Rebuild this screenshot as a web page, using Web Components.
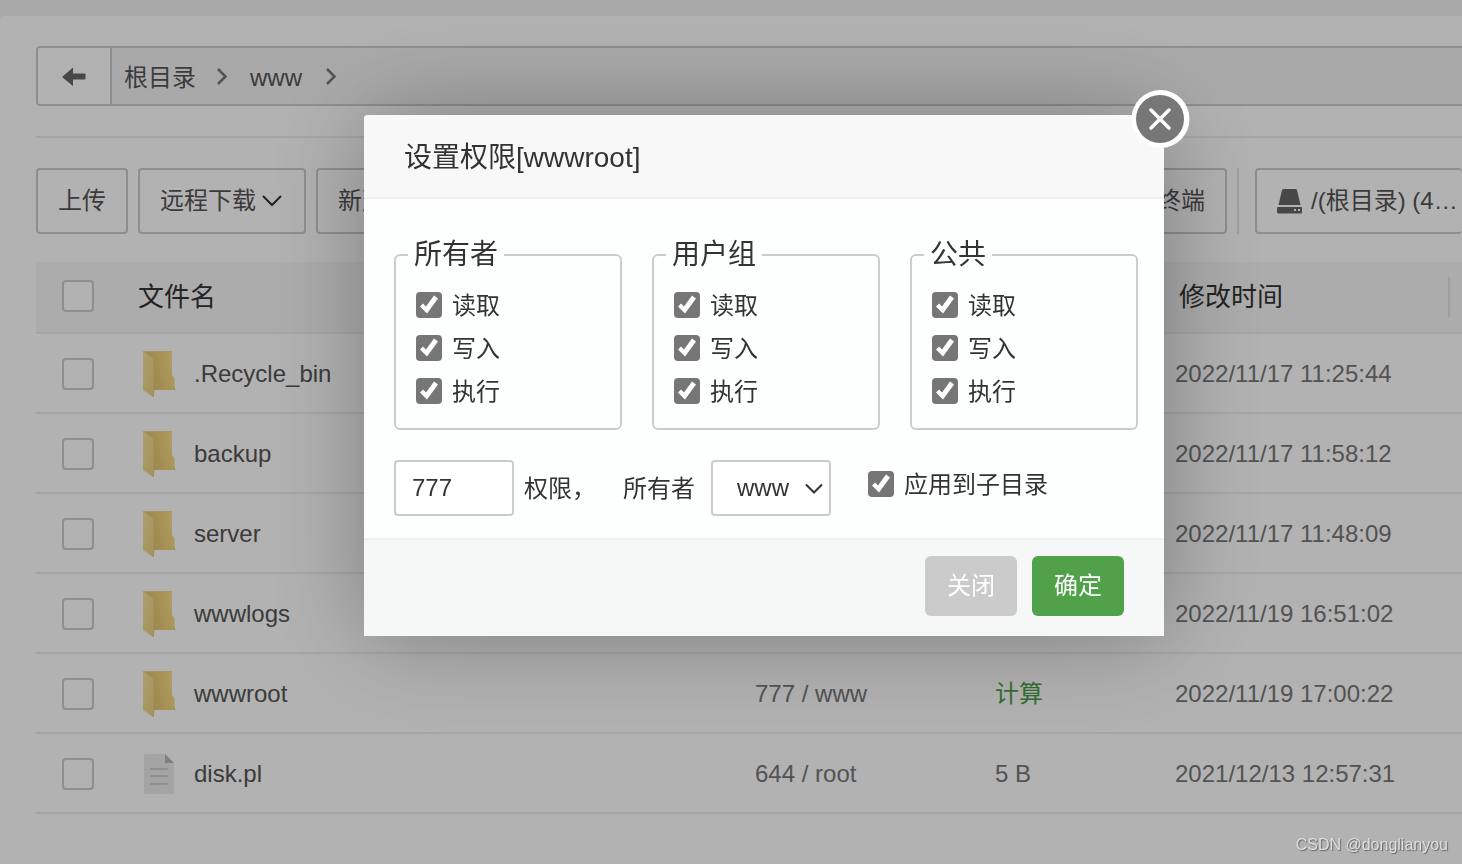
<!DOCTYPE html>
<html lang="zh-CN">
<head>
<meta charset="utf-8">
<title>文件管理</title>
<style>
body{margin:0;background:#f2f2f2;color:#555;font:24px/36px "Liberation Sans","Noto Sans CJK SC",sans-serif;height:100vh;overflow:hidden}
</style>
</head>
<body>
<file-page></file-page>
<perm-dialog heading="设置权限[wwwroot]"></perm-dialog>
<water-mark>CSDN @donglianyou</water-mark>
<script>
function define(name, html, setup) {
  const tpl = document.createElement('template');
  tpl.innerHTML = '<style>*{box-sizing:border-box}svg{display:block;flex:none}button,input,select{font:inherit;color:inherit;margin:0}</style>' + html;
  customElements.define(name, class extends HTMLElement {
    constructor() {
      super();
      this.attachShadow({mode: 'open'}).append(tpl.content.cloneNode(true));
    }
    connectedCallback() { if (setup) setup(this, this.shadowRoot); }
  });
}

define('path-bar', `<style>
:host{display:flex;height:60px;box-sizing:border-box;background:#f3f3f3;border:2px solid #ccc;border-right:0;border-radius:4px 0 0 4px;overflow:hidden}
button{width:74px;padding:2px 0 0;display:grid;place-items:center;border:0;border-right:2px solid #ccc;background:#fff}
nav{display:flex;align-items:center;padding:3px 0 0 12px}
a{color:inherit;text-decoration:none}
svg.sep{margin:0 20px}
</style>
<button aria-label="返回"><svg width="24" height="20"><path d="M0 10 11 0.5V6.500H22.500q1 0 1 1v4q0 1-1 1H11V19z" fill="#666"/></svg></button>
<nav aria-label="路径"><a href="#root">根目录</a><svg class="sep" width="14" height="20"><path d="M2 1 9.500 8.500 2 16" fill="none" stroke="#777" stroke-width="2.500"/></svg><a href="#www">www</a><svg class="sep" width="18" height="20"><path d="M5 1 12.500 8.500 5 16" fill="none" stroke="#777" stroke-width="2.500"/></svg></nav>`);

define('tool-button', `<style>
:host{display:block;flex:none}
button{display:flex;align-items:center;gap:var(--gap,6px);width:100%;height:66px;padding:0 20px;border:2px solid #ccc;border-right-width:var(--end,2px);border-radius:4px;background:#fff;white-space:nowrap}
</style><button><slot></slot></button>`);

define('tool-bar', `<style>
:host{display:flex;gap:10px;overflow:hidden}
.term{margin-left:auto}
.rule{width:2px;background:#e3e3e3;margin-right:6px;flex:none}
.disk{width:207px;--gap:8px;--end:0}
</style>
<tool-button>上传</tool-button>
<tool-button>远程下载<svg width="22" height="14"><path d="M1 2 10 11 19 2" fill="none" stroke="#333" stroke-width="2"/></svg></tool-button>
<tool-button>新建</tool-button>
<tool-button class="term">终端</tool-button>
<div class="rule"></div>
<tool-button class="disk"><svg width="26" height="26"><path d="M5 2q.4-1 1.500-1h12q1.200 0 1.500 1l3.500 15H1.500zM1 19h23q1 0 1 1v4q0 1.500-1.500 1.500h-22Q0 25.500 0 24v-4q0-1 1-1z" fill="#666"/><path d="M17 21h2v2h-2zM21 21h2v2h-2z" fill="#fff"/></svg>/(根目录) (4…</tool-button>`);

define('file-icon', `<style>:host{display:block;width:34px;height:48px}:host([kind=file]) .dir,:host(:not([kind=file])) .doc{display:none}</style>
<svg class="dir" width="34" height="48"><defs><linearGradient id="b" x1="0" x2="1" y1=".6" y2=".3"><stop stop-color="#dab965"/><stop offset="1" stop-color="#fce08a"/></linearGradient><linearGradient id="f" x1="0" x2="1" y1="0" y2="1"><stop stop-color="#f8e29b"/><stop offset="1" stop-color="#ebd183"/></linearGradient></defs>
<path d="M30 35 33 38V40H28z" fill="#aaa"/><path d="M1 1H30V25L32.500 28V40H10z" fill="url(#b)"/><path d="M1 1H30V2H2z" fill="#efd98d"/><path d="M1 1 12 9V40L11 47 1 40z" fill="url(#f)"/><path d="M12 9V40L11 47" fill="none" stroke="#e5c874"/></svg>
<svg class="doc" width="34" height="48"><path d="M4 4H23L32 13V42q0 2-2 2H4q-2 0-2-2V6q0-2 2-2z" fill="#ebebeb"/><path d="M23 4 32 13H23z" fill="#b5b5b5"/><path d="M9 19H25M9 26H25M9 34H25" stroke="#ccc" stroke-width="2" stroke-linecap="round"/></svg>`);

define('file-table', `<style>
:host{display:block}
table{width:100%;table-layout:fixed;border-collapse:separate;border-spacing:0}
th,td{padding:0;border-bottom:2px solid #ededed;text-align:left;font-weight:400;white-space:nowrap}
th{height:72px;background:#f7f7f7;color:#333;font-size:26px}
td{height:80px;padding-top:2px;color:#777}
.pick{width:102px;padding-left:26px}.name{width:617px}.perm{width:240px}.size{width:180px}
th.pick{padding-bottom:2px}
th.date{padding-left:4px}
.head{display:flex;justify-content:space-between;align-items:center;padding-right:12px}
.head i{width:2px;height:40px;background:#e3e3e3}
.entry{display:flex;align-items:center;gap:18px;padding-left:4px;color:#555}
input{appearance:none;display:block;width:32px;height:32px;border:2px solid #ccc;border-radius:4px;background:#fff}
a{color:#4a9f43;text-decoration:none}
</style>
<table><thead><tr><th class="pick"><input type="checkbox" aria-label="全选"></th><th class="name">文件名</th><th class="perm"></th><th class="size"></th><th class="date"><div class="head">修改时间<i></i></div></th></tr></thead><tbody></tbody></table>`,
(host, root) => {
  const rows = [
    ['.Recycle_bin', '', '', '2022/11/17 11:25:44'],
    ['backup', '', '', '2022/11/17 11:58:12'],
    ['server', '', '', '2022/11/17 11:48:09'],
    ['wwwlogs', '', '', '2022/11/19 16:51:02'],
    ['wwwroot', '777 / www', '<a href="#size">计算</a>', '2022/11/19 17:00:22'],
    ['disk.pl', '644 / root', '5 B', '2021/12/13 12:57:31', 'file']
  ];
  root.querySelector('tbody').innerHTML = rows.map(([n, p, s, d, k = 'dir']) =>
    `<tr><td class="pick"><input type="checkbox" aria-label="${n}"></td><td><div class="entry"><file-icon kind="${k}"></file-icon><span>${n}</span></div></td><td>${p}</td><td>${s}</td><td>${d}</td></tr>`).join('');
});

define('file-page', `<style>
:host{display:block;margin-top:16px;min-height:calc(100vh - 16px);padding:30px 0 0 36px;box-sizing:border-box;background:#fff;border-radius:4px 0 0 0}
hr{height:2px;border:0;margin:30px 0;background:#ededed}
file-table{margin-top:28px}
</style>
<path-bar></path-bar><hr><tool-bar></tool-bar><file-table></file-table>`);

define('check-item', `<style>
:host{display:block}
label{display:flex;align-items:center;gap:10px;height:43px}
span{padding-top:2px}
input{appearance:none;width:26px;height:26px;border-radius:4px;background:#767676}
input:checked::before{content:"";display:block;width:26px;height:26px;background:#fff;clip-path:polygon(4px 15px,7px 12px,10px 15px,18px 4px,22px 7px,11px 22px)}
</style><label><input type="checkbox" checked><span><slot></slot></span></label>`);

define('perm-group', `<style>
:host{display:block;flex:1}
fieldset{margin:0;min-width:0;height:195px;border:2px solid #ccc;border-radius:6px;padding:8px 20px 0}
legend{margin-left:-8px;padding:0 6px;font-size:28px;line-height:40px}
</style><fieldset><legend></legend><check-item>读取</check-item><check-item>写入</check-item><check-item>执行</check-item></fieldset>`,
(host, root) => { root.querySelector('legend').textContent = host.getAttribute('name'); });

define('perm-dialog', `<style>
:host{position:fixed;inset:0;display:flex;justify-content:center;align-items:flex-start;padding:115px 0 0 66px;box-sizing:border-box;background:rgba(0,0,0,.3);color:#333}
section{position:relative;width:800px;background:#fdfefe;border-radius:4px 4px 0 0;box-shadow:2px 2px 100px rgba(0,0,0,.3)}
h2{margin:0;height:84px;padding:2px 40px 0;border-bottom:2px solid #eee;border-radius:4px 4px 0 0;background:#f8f8f8;font-size:28px;line-height:82px;font-weight:400}
.close{position:absolute;top:-26px;right:-26px;width:58px;height:60px;padding:0;border:0;background:none}
.groups{display:flex;gap:30px;padding:36px 26px 30px 30px}
.line{display:flex;align-items:center;padding:0 30px 22px}
.line input,select{width:120px;height:56px;border:2px solid #ccc;border-radius:4px;background:#fff;padding:0 16px}
.line label{padding-top:2px}
.unit{margin:0 27px 0 10px}
.pick{position:relative;margin:0 37px 0 16px}
select{appearance:none;display:block;padding-left:24px}
.pick svg{position:absolute;right:7px;top:22px;pointer-events:none}
.line check-item{align-self:flex-start;padding-top:2px}
footer{display:flex;justify-content:flex-end;gap:15px;padding:16px 40px 20px;border-top:2px solid #eef0f0;background:#f5f8f7}
footer button{width:92px;height:60px;border:0;border-radius:6px;padding:0;background:#cbcbcb;color:#fff}
footer .ok{background:#50a14a}
</style>
<section role="dialog">
<h2></h2>
<div class="groups"><perm-group name="所有者"></perm-group><perm-group name="用户组"></perm-group><perm-group name="公共"></perm-group></div>
<div class="line"><input id="mode" type="text" value="777"><label class="unit" for="mode">权限，</label><label for="owner">所有者</label><span class="pick"><select id="owner"><option>www</option></select><svg width="20" height="14"><path d="M2 2.500 10 10.500 18 2.500" fill="none" stroke="#333" stroke-width="2"/></svg></span><check-item>应用到子目录</check-item></div>
<footer><button>关闭</button><button class="ok">确定</button></footer>
<button class="close" aria-label="关闭窗口"><svg width="58" height="60"><circle cx="28.500" cy="30" r="29" fill="#fff"/><circle cx="28" cy="30" r="24" fill="#777"/><path d="M19 21 37 39M37 21 19 39" stroke="#fff" stroke-width="3.500" stroke-linecap="round"/></svg></button>
</section>`,
(host, root) => { root.querySelector('h2').textContent = host.getAttribute('heading'); });

define('water-mark', `<style>:host{position:fixed;right:14px;bottom:7px;font-size:16px;line-height:24px;color:#dedede;text-shadow:1px 1px 1px #666}</style><slot></slot>`);
</script>
</body>
</html>
